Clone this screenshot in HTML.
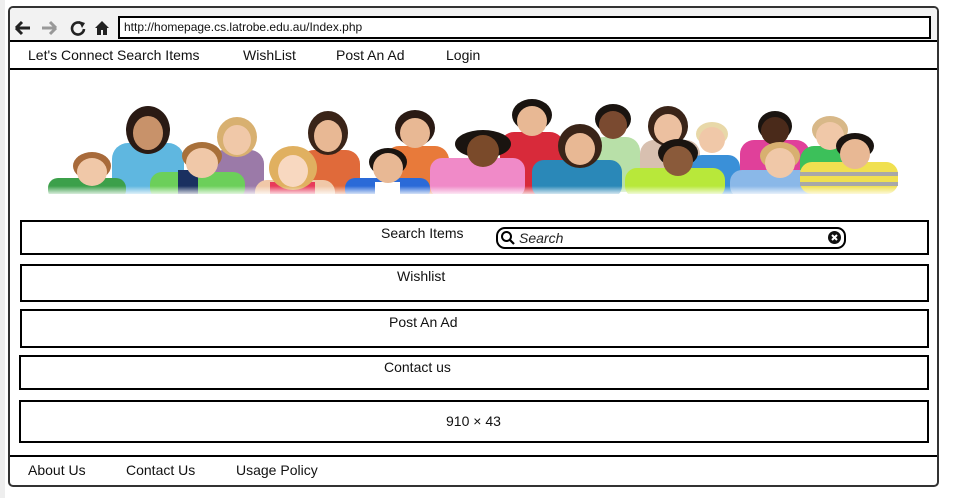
<!DOCTYPE html>
<html><head><meta charset="utf-8"><style>
body{margin:0;width:953px;height:498px;background:#fff;position:relative;overflow:hidden;font-family:"Liberation Sans",sans-serif;font-size:14px;color:#111}
.a{position:absolute}
.box{position:absolute;border:2px solid #000;box-sizing:border-box;background:#fff}
.t{position:absolute;white-space:nowrap}
</style></head><body>
<div class="a" style="left:0;top:0;width:5px;height:498px;background:#eee"></div>
<div class="a" style="left:8px;top:6px;width:931px;height:481px;border:2px solid #333;border-radius:5px;box-sizing:border-box;background:#fff"></div>
<div class="a" style="left:10px;top:8px;width:927px;height:32px;background:#f2f2f2;border-radius:3px 3px 0 0"></div>
<svg class="a" style="left:12px;top:16px" width="102" height="24" viewBox="0 0 102 24">
<path d="M4 12h14M4 12l6-6M4 12l6 6" stroke="#222" stroke-width="3" fill="none"/>
<path d="M30 12h14M44 12l-6-6M44 12l-6 6" stroke="#999" stroke-width="3" fill="none"/>
<path d="M70 8a6 6 0 1 0 2 5" stroke="#222" stroke-width="2.6" fill="none"/><path d="M67 5l6 2-3 5z" fill="#222"/>
<path d="M83 12l7-7 7 7h-2v7h-4v-5h-2v5h-4v-7z" fill="#222"/>
</svg>
<div class="box" style="left:118px;top:16px;width:813px;height:23px;border-width:2px"></div>
<div class="t" style="left:124px;top:20px;font-size:12px">http://homepage.cs.latrobe.edu.au/Index.php</div>
<div class="a" style="left:10px;top:40px;width:927px;height:2px;background:#000"></div>
<div class="a" style="left:10px;top:68px;width:927px;height:2px;background:#000"></div>
<div class="t" style="left:28px;top:47px">Let's Connect Search Items</div>
<div class="t" style="left:243px;top:47px">WishList</div>
<div class="t" style="left:336px;top:47px">Post An Ad</div>
<div class="t" style="left:446px;top:47px">Login</div>

<svg class="a" style="left:0;top:0" width="953" height="220" viewBox="0 0 953 220">
<defs><linearGradient id="f" x1="0" y1="0" x2="0" y2="1"><stop offset="0" stop-color="#fff" stop-opacity="0"/><stop offset="1" stop-color="#fff"/></linearGradient></defs>
<g>
<!-- back row bodies -->
<rect x="112" y="143" width="72" height="55" rx="16" fill="#5fb7e0"/>
<rect x="210" y="150" width="54" height="45" rx="14" fill="#9b7aa8"/>
<rect x="300" y="150" width="60" height="45" rx="14" fill="#e06a3a"/>
<rect x="385" y="146" width="64" height="50" rx="14" fill="#e87a3a"/>
<rect x="500" y="132" width="64" height="62" rx="14" fill="#d82a3a"/>
<rect x="590" y="137" width="50" height="55" rx="14" fill="#b8e0a8"/>
<rect x="640" y="140" width="60" height="55" rx="14" fill="#d8c0b0"/>
<rect x="740" y="140" width="70" height="50" rx="14" fill="#e0409a"/>
<rect x="800" y="146" width="55" height="45" rx="14" fill="#3cc05a"/>
<!-- back row heads -->
<ellipse cx="148" cy="130" rx="22" ry="24" fill="#2a1a14"/><ellipse cx="148" cy="133" rx="15" ry="17" fill="#c8926a"/>
<ellipse cx="237" cy="137" rx="20" ry="20" fill="#d8b070"/><ellipse cx="237" cy="140" rx="14" ry="15" fill="#f0c8a8"/>
<ellipse cx="328" cy="133" rx="20" ry="22" fill="#3a2418"/><ellipse cx="328" cy="136" rx="14" ry="16" fill="#e8b894"/>
<ellipse cx="415" cy="128" rx="20" ry="18" fill="#2a1a14"/><ellipse cx="415" cy="133" rx="15" ry="15" fill="#e8b894"/>
<ellipse cx="532" cy="115" rx="20" ry="16" fill="#1a1410"/><ellipse cx="532" cy="121" rx="15" ry="15" fill="#e8b894"/>
<ellipse cx="613" cy="119" rx="18" ry="15" fill="#1a1410"/><ellipse cx="613" cy="125" rx="14" ry="14" fill="#7a4a30"/>
<ellipse cx="668" cy="126" rx="20" ry="20" fill="#3a2418"/><ellipse cx="668" cy="129" rx="14" ry="15" fill="#ecc0a0"/>
<ellipse cx="775" cy="126" rx="17" ry="15" fill="#1a1410"/><ellipse cx="775" cy="131" rx="14" ry="14" fill="#4a2a1a"/>
<ellipse cx="830" cy="130" rx="18" ry="14" fill="#d8b888"/><ellipse cx="830" cy="136" rx="14" ry="14" fill="#f0c8a8"/>
<ellipse cx="712" cy="134" rx="16" ry="12" fill="#e8d8a8"/><ellipse cx="712" cy="140" rx="13" ry="13" fill="#f0c8a8"/>
<rect x="690" y="155" width="50" height="40" rx="12" fill="#3a90d8"/>
<!-- front row bodies -->
<rect x="48" y="178" width="78" height="22" rx="10" fill="#3ca04a"/>
<rect x="150" y="172" width="95" height="28" rx="12" fill="#6ccf5a"/>
<rect x="178" y="170" width="20" height="26" fill="#1a3060"/>
<rect x="255" y="180" width="80" height="32" rx="12" fill="#f0c8a8"/><rect x="270" y="182" width="45" height="16" fill="#e83a5a"/>
<rect x="345" y="178" width="85" height="22" rx="10" fill="#2a6ad8"/><rect x="375" y="182" width="25" height="14" fill="#fff"/>
<rect x="430" y="158" width="95" height="40" rx="12" fill="#f08ac8"/>
<rect x="532" y="160" width="90" height="38" rx="12" fill="#2a88b8"/>
<rect x="625" y="168" width="100" height="30" rx="12" fill="#b8e83a"/>
<rect x="730" y="170" width="90" height="28" rx="12" fill="#8ab8e8"/>
<rect x="800" y="162" width="98" height="32" rx="12" fill="#f0e050"/>
<rect x="800" y="172" width="98" height="4" fill="#a8a8a8"/><rect x="800" y="182" width="98" height="4" fill="#a8a8a8"/>
<!-- front row heads -->
<ellipse cx="92" cy="166" rx="19" ry="14" fill="#a86a3a"/><ellipse cx="92" cy="172" rx="15" ry="14" fill="#f0c8a8"/>
<ellipse cx="202" cy="156" rx="20" ry="14" fill="#a8703a"/><ellipse cx="202" cy="163" rx="16" ry="15" fill="#f0c8a8"/>
<ellipse cx="293" cy="168" rx="24" ry="22" fill="#e0b060"/><ellipse cx="293" cy="171" rx="15" ry="16" fill="#f8d8c0"/>
<ellipse cx="388" cy="162" rx="19" ry="14" fill="#1a1410"/><ellipse cx="388" cy="168" rx="15" ry="15" fill="#e8b894"/>
<ellipse cx="483" cy="144" rx="28" ry="14" fill="#1a1410"/><ellipse cx="483" cy="151" rx="16" ry="16" fill="#7a4a2a"/>
<ellipse cx="580" cy="146" rx="22" ry="22" fill="#3a2418"/><ellipse cx="580" cy="149" rx="15" ry="16" fill="#e8b894"/>
<ellipse cx="678" cy="153" rx="20" ry="14" fill="#1a1410"/><ellipse cx="678" cy="161" rx="15" ry="15" fill="#8a5a3a"/>
<ellipse cx="780" cy="156" rx="20" ry="14" fill="#d8b070"/><ellipse cx="780" cy="163" rx="15" ry="15" fill="#f0c8a8"/>
<ellipse cx="855" cy="146" rx="19" ry="13" fill="#1a1410"/><ellipse cx="855" cy="154" rx="15" ry="15" fill="#e8b894"/>
</g>
<rect x="10" y="194" width="927" height="26" fill="#fff"/>
<rect x="10" y="186" width="927" height="10" fill="url(#f)"/>
</svg>

<div class="box" style="left:20px;top:220px;width:909px;height:35px"></div>
<div class="t" style="left:381px;top:225px">Search Items</div>
<div class="box" style="left:496px;top:227px;width:350px;height:22px;border-radius:9px"></div>
<svg class="a" style="left:500px;top:230px" width="16" height="16"><circle cx="6.5" cy="6.5" r="4.5" stroke="#000" stroke-width="2" fill="none"/><path d="M10 10l4 4" stroke="#000" stroke-width="2.2"/></svg>
<div class="t" style="left:519px;top:230px;font-style:italic;font-size:14px;color:#222">Search</div>
<svg class="a" style="left:827px;top:230px" width="15" height="15"><circle cx="7.5" cy="7.5" r="6.5" fill="#111"/><path d="M5 5l5 5M10 5l-5 5" stroke="#fff" stroke-width="2"/></svg>
<div class="box" style="left:20px;top:264px;width:909px;height:38px"></div>
<div class="t" style="left:397px;top:268px">Wishlist</div>
<div class="box" style="left:20px;top:309px;width:909px;height:39px"></div>
<div class="t" style="left:389px;top:314px">Post An Ad</div>
<div class="box" style="left:19px;top:355px;width:910px;height:35px"></div>
<div class="t" style="left:384px;top:359px">Contact us</div>
<div class="box" style="left:19px;top:400px;width:910px;height:43px"></div>
<div class="t" style="left:446px;top:413px">910 × 43</div>
<div class="a" style="left:10px;top:455px;width:927px;height:2px;background:#000"></div>
<div class="t" style="left:28px;top:462px">About Us</div>
<div class="t" style="left:126px;top:462px">Contact Us</div>
<div class="t" style="left:236px;top:462px">Usage Policy</div>
</body></html>
